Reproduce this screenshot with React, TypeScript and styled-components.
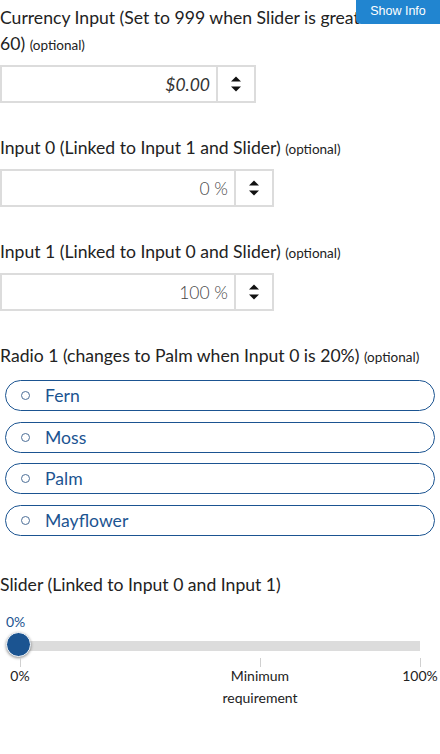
import React from 'react'
import styled, { createGlobalStyle } from 'styled-components'

const blue = '#1b5491'

const GlobalStyle = createGlobalStyle`
  body {
    margin: 0;
    background: #fff;
    font-family: Lato, "Open Sans", sans-serif;
    color: #222;
  }
`

const Page = styled.div`
  position: relative;
  width: 440px;
  padding-top: 5px;
  display: flex;
  flex-direction: column;
  overflow: hidden;
`

const InfoButton = styled.button`
  position: absolute;
  top: 0;
  right: 0;
  width: 84px;
  height: 24px;
  border: none;
  border-radius: 0 0 0 5px;
  background: #2185d0;
  color: #fff;
  font-family: "Liberation Sans", Arial, sans-serif;
  font-size: 12.5px;
  padding: 0 0 3px;
`

const Field = styled.div<{ $gap?: number }>`
  display: flex;
  flex-direction: column;
  margin-bottom: ${p => p.$gap ?? 32}px;
`

const Label = styled.div<{ $space?: number }>`
  max-width: 428px;
  font-size: 17.6px;
  line-height: 26px;
  margin-bottom: ${p => p.$space ?? 7}px;
`

const Optional = styled.span`
  font-size: 13.5px;
`

const NumberBox = styled.div<{ $width: number }>`
  display: flex;
  width: ${p => p.$width}px;
  height: 38px;
  box-sizing: border-box;
  border: 2px solid #dcdcdc;
`

const Value = styled.div<{ $italic?: boolean }>`
  flex: 1;
  display: flex;
  align-items: center;
  justify-content: flex-end;
  padding-right: 6px;
  font-size: 17.5px;
  font-weight: ${p => (p.$italic ? 400 : 300)};
  font-style: ${p => (p.$italic ? 'italic' : 'normal')};
  color: ${p => (p.$italic ? '#333' : '#444')};
`

const Spinner = styled.div`
  width: 36px;
  border-left: 2px solid #dcdcdc;
  display: flex;
  align-items: center;
  justify-content: center;
`

const RadioList = styled.div`
  display: flex;
  flex-direction: column;
  gap: 10.5px;
  padding: 0 5px;
`

const RadioPill = styled.label`
  display: flex;
  align-items: center;
  height: 31px;
  box-sizing: border-box;
  border: 1px solid ${blue};
  border-radius: 16px;
  padding-left: 15px;
  color: ${blue};
  font-size: 17.6px;
`

const RadioDot = styled.span`
  width: 9px;
  height: 9px;
  box-sizing: border-box;
  border: 1px solid #4d6f98;
  border-radius: 50%;
  margin-right: 15px;
`

const SliderWrap = styled.div`
  display: flex;
  flex-direction: column;
  padding: 0 20px 0 18px;
`

const SliderValue = styled.div`
  color: ${blue};
  font-size: 14px;
  margin: 9px 0 0 -12px;
  line-height: 16px;
`

const Track = styled.div`
  position: relative;
  height: 10px;
  margin-top: 11px;
  background: #dcdcdc;
`

const Thumb = styled.div`
  position: absolute;
  left: -12px;
  top: -9px;
  width: 25px;
  height: 25px;
  box-sizing: border-box;
  border-radius: 50%;
  background: ${blue};
  border: 1px solid #fff;
  box-shadow: 0 1px 3px rgba(0, 0, 0, 0.45);
`

const Scale = styled.div`
  position: relative;
  height: 56px;
  margin: 7px 0 0 2px;
`

const Tick = styled.div`
  position: absolute;
  top: 0;
  width: 0;
  display: flex;
  flex-direction: column;
  align-items: center;
`

const TickLine = styled.span`
  width: 1px;
  height: 9px;
  background: #d0d0d0;
`

const TickLabel = styled.span`
  width: max-content;
  max-width: 90px;
  margin-top: -2px;
  text-align: center;
  font-size: 14px;
  line-height: 22px;
  color: #222;
`

const SpinIcon = () => (
  <svg width="12" height="18" viewBox="0 0 12 18">
    <path d="M1 6.5 L6 1.5 L11 6.5 Z" fill="#111" />
    <path d="M1 11.5 L11 11.5 L6 16.5 Z" fill="#111" />
  </svg>
)

const radios = ['Fern', 'Moss', 'Palm', 'Mayflower']

const ticks = [
  { key: 'min', label: '0%', at: 0 },
  { key: 'req', label: 'Minimum requirement', at: 60 },
  { key: 'max', label: '100%', at: 100 }
]

export default function App() {
  return (
    <Page>
      <GlobalStyle />
      <InfoButton>Show Info</InfoButton>

      <Field>
        <Label>
          Currency Input (Set to 999 when Slider is greater than 60) <Optional>(optional)</Optional>
        </Label>
        <NumberBox $width={256}>
          <Value $italic>$0.00</Value>
          <Spinner><SpinIcon /></Spinner>
        </NumberBox>
      </Field>

      <Field>
        <Label>
          Input 0 (Linked to Input 1 and Slider) <Optional>(optional)</Optional>
        </Label>
        <NumberBox $width={274}>
          <Value>0 %</Value>
          <Spinner><SpinIcon /></Spinner>
        </NumberBox>
      </Field>

      <Field>
        <Label>
          Input 1 (Linked to Input 0 and Slider) <Optional>(optional)</Optional>
        </Label>
        <NumberBox $width={274}>
          <Value>100 %</Value>
          <Spinner><SpinIcon /></Spinner>
        </NumberBox>
      </Field>

      <Field $gap={36}>
        <Label $space={10}>
          Radio 1 (changes to Palm when Input 0 is 20%) <Optional>(optional)</Optional>
        </Label>
        <RadioList>
          {radios.map(name => (
            <RadioPill key={name}>
              <RadioDot />
              {name}
            </RadioPill>
          ))}
        </RadioList>
      </Field>

      <Field>
        <Label>Slider (Linked to Input 0 and Input 1)</Label>
        <SliderWrap>
          <SliderValue>0%</SliderValue>
          <Track>
            <Thumb />
          </Track>
          <Scale>
            {ticks.map(t => (
              <Tick key={t.key} style={{ left: `${t.at}%` }}>
                <TickLine />
                <TickLabel>{t.label}</TickLabel>
              </Tick>
            ))}
          </Scale>
        </SliderWrap>
      </Field>
    </Page>
  )
}
